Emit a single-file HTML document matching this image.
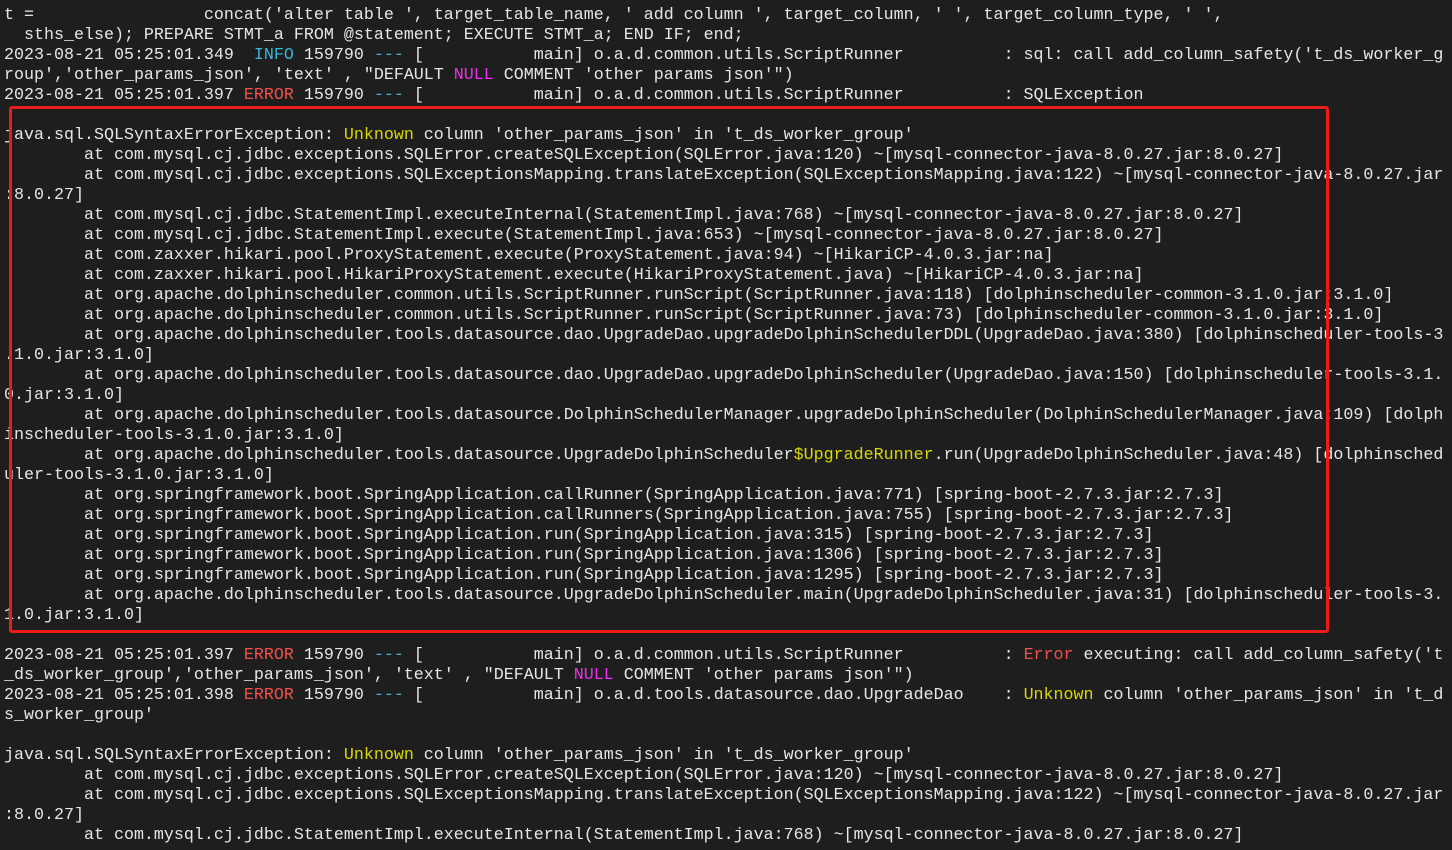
<!DOCTYPE html>
<html><head><meta charset="utf-8"><style>
html,body{margin:0;padding:0;background:#1e1e1e;width:1452px;height:850px;overflow:hidden}
#t{position:absolute;left:4px;top:6px;font-family:"Liberation Mono","DejaVu Sans Mono",monospace;font-size:16.6667px;color:#e6e6e6}
#t div{height:20px;line-height:20px;white-space:pre}
.i{color:#3cb4d8}.e{color:#f0524a}.n{color:#f02ef0}.y{color:#d8d800}.d{color:#5ab0d8}
#box{position:absolute;left:9px;top:106px;width:1314px;height:521px;border:3px solid #ec1c1c;border-radius:3px}
</style></head><body>
<div id="t"><div>t =                 concat('alter table ', target_table_name, ' add column ', target_column, ' ', target_column_type, ' ',</div><div>  sths_else); PREPARE STMT_a FROM @statement; EXECUTE STMT_a; END IF; end;</div><div>2023-08-21 05:25:01.349  <span class="i">INFO</span> 159790 <span class="d">---</span> [           main] o.a.d.common.utils.ScriptRunner          : sql: call add_column_safety('t_ds_worker_g</div><div>roup','other_params_json', 'text' , "DEFAULT <span class="n">NULL</span> COMMENT 'other params json'")</div><div>2023-08-21 05:25:01.397 <span class="e">ERROR</span> 159790 <span class="d">---</span> [           main] o.a.d.common.utils.ScriptRunner          : SQLException</div><div></div><div>java.sql.SQLSyntaxErrorException: <span class="y">Unknown</span> column 'other_params_json' in 't_ds_worker_group'</div><div>        at com.mysql.cj.jdbc.exceptions.SQLError.createSQLException(SQLError.java:120) ~[mysql-connector-java-8.0.27.jar:8.0.27]</div><div>        at com.mysql.cj.jdbc.exceptions.SQLExceptionsMapping.translateException(SQLExceptionsMapping.java:122) ~[mysql-connector-java-8.0.27.jar</div><div>:8.0.27]</div><div>        at com.mysql.cj.jdbc.StatementImpl.executeInternal(StatementImpl.java:768) ~[mysql-connector-java-8.0.27.jar:8.0.27]</div><div>        at com.mysql.cj.jdbc.StatementImpl.execute(StatementImpl.java:653) ~[mysql-connector-java-8.0.27.jar:8.0.27]</div><div>        at com.zaxxer.hikari.pool.ProxyStatement.execute(ProxyStatement.java:94) ~[HikariCP-4.0.3.jar:na]</div><div>        at com.zaxxer.hikari.pool.HikariProxyStatement.execute(HikariProxyStatement.java) ~[HikariCP-4.0.3.jar:na]</div><div>        at org.apache.dolphinscheduler.common.utils.ScriptRunner.runScript(ScriptRunner.java:118) [dolphinscheduler-common-3.1.0.jar:3.1.0]</div><div>        at org.apache.dolphinscheduler.common.utils.ScriptRunner.runScript(ScriptRunner.java:73) [dolphinscheduler-common-3.1.0.jar:3.1.0]</div><div>        at org.apache.dolphinscheduler.tools.datasource.dao.UpgradeDao.upgradeDolphinSchedulerDDL(UpgradeDao.java:380) [dolphinscheduler-tools-3</div><div>.1.0.jar:3.1.0]</div><div>        at org.apache.dolphinscheduler.tools.datasource.dao.UpgradeDao.upgradeDolphinScheduler(UpgradeDao.java:150) [dolphinscheduler-tools-3.1.</div><div>0.jar:3.1.0]</div><div>        at org.apache.dolphinscheduler.tools.datasource.DolphinSchedulerManager.upgradeDolphinScheduler(DolphinSchedulerManager.java:109) [dolph</div><div>inscheduler-tools-3.1.0.jar:3.1.0]</div><div>        at org.apache.dolphinscheduler.tools.datasource.UpgradeDolphinScheduler<span class="y">$UpgradeRunner</span>.run(UpgradeDolphinScheduler.java:48) [dolphinsched</div><div>uler-tools-3.1.0.jar:3.1.0]</div><div>        at org.springframework.boot.SpringApplication.callRunner(SpringApplication.java:771) [spring-boot-2.7.3.jar:2.7.3]</div><div>        at org.springframework.boot.SpringApplication.callRunners(SpringApplication.java:755) [spring-boot-2.7.3.jar:2.7.3]</div><div>        at org.springframework.boot.SpringApplication.run(SpringApplication.java:315) [spring-boot-2.7.3.jar:2.7.3]</div><div>        at org.springframework.boot.SpringApplication.run(SpringApplication.java:1306) [spring-boot-2.7.3.jar:2.7.3]</div><div>        at org.springframework.boot.SpringApplication.run(SpringApplication.java:1295) [spring-boot-2.7.3.jar:2.7.3]</div><div>        at org.apache.dolphinscheduler.tools.datasource.UpgradeDolphinScheduler.main(UpgradeDolphinScheduler.java:31) [dolphinscheduler-tools-3.</div><div>1.0.jar:3.1.0]</div><div></div><div>2023-08-21 05:25:01.397 <span class="e">ERROR</span> 159790 <span class="d">---</span> [           main] o.a.d.common.utils.ScriptRunner          : <span class="e">Error</span> executing: call add_column_safety('t</div><div>_ds_worker_group','other_params_json', 'text' , "DEFAULT <span class="n">NULL</span> COMMENT 'other params json'")</div><div>2023-08-21 05:25:01.398 <span class="e">ERROR</span> 159790 <span class="d">---</span> [           main] o.a.d.tools.datasource.dao.UpgradeDao    : <span class="y">Unknown</span> column 'other_params_json' in 't_d</div><div>s_worker_group'</div><div></div><div>java.sql.SQLSyntaxErrorException: <span class="y">Unknown</span> column 'other_params_json' in 't_ds_worker_group'</div><div>        at com.mysql.cj.jdbc.exceptions.SQLError.createSQLException(SQLError.java:120) ~[mysql-connector-java-8.0.27.jar:8.0.27]</div><div>        at com.mysql.cj.jdbc.exceptions.SQLExceptionsMapping.translateException(SQLExceptionsMapping.java:122) ~[mysql-connector-java-8.0.27.jar</div><div>:8.0.27]</div><div>        at com.mysql.cj.jdbc.StatementImpl.executeInternal(StatementImpl.java:768) ~[mysql-connector-java-8.0.27.jar:8.0.27]</div></div>
<div id="box"></div>
</body></html>
